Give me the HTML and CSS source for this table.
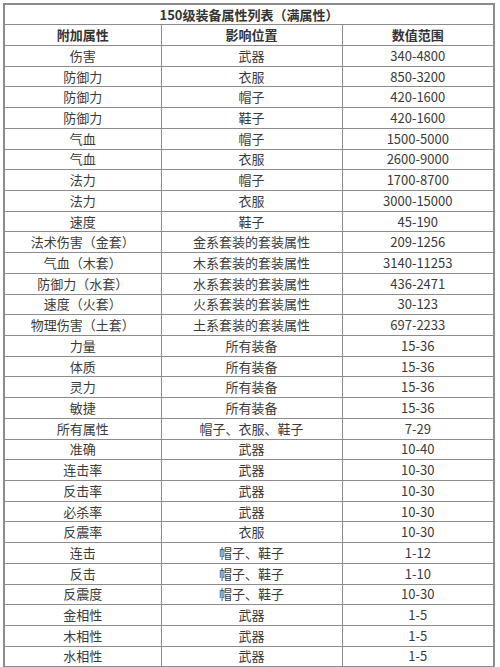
FILE: index.html
```html
<!DOCTYPE html>
<html lang="zh-CN">
<head>
<meta charset="utf-8">
<title>150级装备属性列表</title>
<link rel="stylesheet" href="styles.css">
</head>
<body>
<div class="page">
<table class="attr-table">
<colgroup>
<col class="c1"><col class="c2"><col class="c3">
</colgroup>
<thead>
<tr class="title-row"><th colspan="3">150级装备属性列表（满属性）</th></tr>
<tr class="head-row"><th>附加属性</th><th>影响位置</th><th>数值范围</th></tr>
</thead>
<tbody>
<tr><td>伤害</td><td>武器</td><td>340-4800</td></tr>
<tr><td>防御力</td><td>衣服</td><td>850-3200</td></tr>
<tr><td>防御力</td><td>帽子</td><td>420-1600</td></tr>
<tr><td>防御力</td><td>鞋子</td><td>420-1600</td></tr>
<tr><td>气血</td><td>帽子</td><td>1500-5000</td></tr>
<tr><td>气血</td><td>衣服</td><td>2600-9000</td></tr>
<tr><td>法力</td><td>帽子</td><td>1700-8700</td></tr>
<tr><td>法力</td><td>衣服</td><td>3000-15000</td></tr>
<tr><td>速度</td><td>鞋子</td><td>45-190</td></tr>
<tr><td>法术伤害（金套）</td><td>金系套装的套装属性</td><td>209-1256</td></tr>
<tr><td>气血（木套）</td><td>木系套装的套装属性</td><td>3140-11253</td></tr>
<tr><td>防御力（水套）</td><td>水系套装的套装属性</td><td>436-2471</td></tr>
<tr><td>速度（火套）</td><td>火系套装的套装属性</td><td>30-123</td></tr>
<tr><td>物理伤害（土套）</td><td>土系套装的套装属性</td><td>697-2233</td></tr>
<tr><td>力量</td><td>所有装备</td><td>15-36</td></tr>
<tr><td>体质</td><td>所有装备</td><td>15-36</td></tr>
<tr><td>灵力</td><td>所有装备</td><td>15-36</td></tr>
<tr><td>敏捷</td><td>所有装备</td><td>15-36</td></tr>
<tr><td>所有属性</td><td>帽子、衣服、鞋子</td><td>7-29</td></tr>
<tr><td>准确</td><td>武器</td><td>10-40</td></tr>
<tr><td>连击率</td><td>武器</td><td>10-30</td></tr>
<tr><td>反击率</td><td>武器</td><td>10-30</td></tr>
<tr><td>必杀率</td><td>武器</td><td>10-30</td></tr>
<tr><td>反震率</td><td>衣服</td><td>10-30</td></tr>
<tr><td>连击</td><td>帽子、鞋子</td><td>1-12</td></tr>
<tr><td>反击</td><td>帽子、鞋子</td><td>1-10</td></tr>
<tr><td>反震度</td><td>帽子、鞋子</td><td>10-30</td></tr>
<tr><td>金相性</td><td>武器</td><td>1-5</td></tr>
<tr><td>木相性</td><td>武器</td><td>1-5</td></tr>
<tr><td>水相性</td><td>武器</td><td>1-5</td></tr>
</tbody>
</table>
</div>
</body>
</html>
```
FILE: styles.css
```css
html, body {
  margin: 0;
  padding: 0;
  background: #ffffff;
}

.page {
  padding: 3px 0 0 3px;
}

.attr-table {
  border-collapse: collapse;
  table-layout: fixed;
  width: 490px;
  font-family: "Noto Sans CJK SC", "Noto Sans", sans-serif;
  font-size: 13px;
  color: #3a3a3a;
  border: 2px solid #8c8c8c;
}

.c1 { width: 157px; }
.c2 { width: 181px; }
.c3 { width: 152px; }

.attr-table tr {
  height: 20.72px;
}

.attr-table th,
.attr-table td {
  border: 1px solid #8c8c8c;
  text-align: center;
  vertical-align: middle;
  padding: 0;
  line-height: 16px;
  font-weight: normal;
}

.attr-table .title-row th,
.attr-table .head-row th {
  font-weight: bold;
  color: #333333;
}
```
